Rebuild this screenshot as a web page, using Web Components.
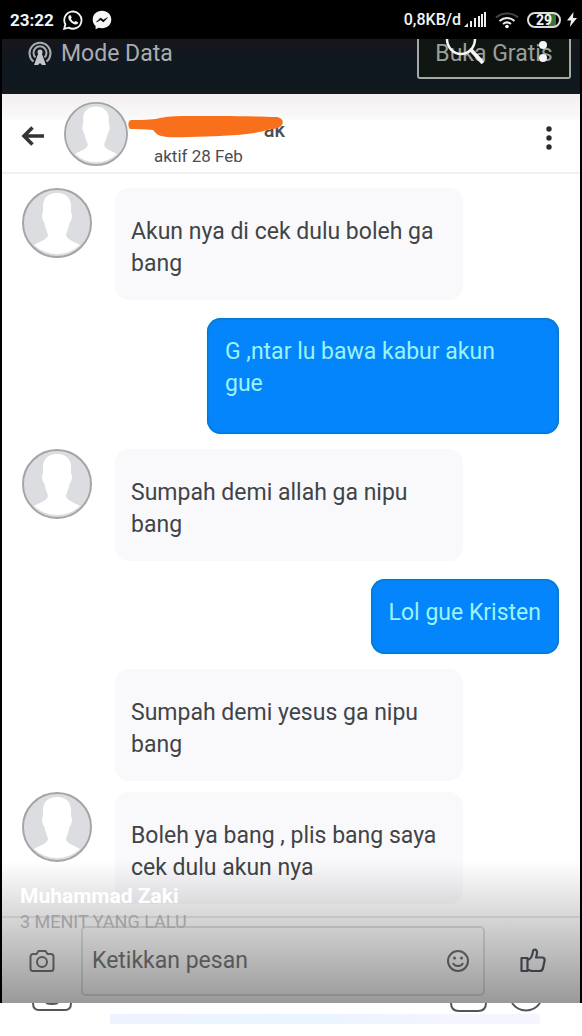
<!DOCTYPE html>
<html lang="id">
<head>
<meta charset="utf-8">
<meta name="viewport" content="width=device-width, initial-scale=1">
<title>Cerita Muhammad Zaki</title>
<style>
body { margin: 0; background: #fff; font-family: Roboto, "Noto Sans", sans-serif; color: #3c4043; }
</style>
</head>
<body>
<story-view></story-view>
<script>
function define(name, html) {
  const template = document.createElement('template');
  template.innerHTML = html;
  customElements.define(name, class extends HTMLElement {
    constructor() {
      super();
      this.attachShadow({ mode: 'open' }).append(template.content.cloneNode(true));
    }
  });
}

define('status-bar', `
<style>
:host { display: flex; align-items: center; justify-content: space-between; height: 39px; padding: 0 5px 0 10px; background: #000; color: #f4f4f4; font-size: 17px; font-weight: 700; line-height: 20px; }
div { display: flex; align-items: center; }
.left { gap: 9px; }
.right { gap: 3px; font-size: 16px; font-weight: 500; }
.wifi { margin-left: 5px; }
.battery { display: flex; align-items: center; justify-content: center; box-sizing: border-box; width: 34px; height: 16px; margin: 0 3px 0 5px; border: 2px solid #ddd; border-radius: 8px; font-size: 14px; font-weight: 700; line-height: 12px; background: linear-gradient(90deg, #000 62%, #3a713c 62%, #3a713c 90%, #000 90%); }
svg { display: block; }
</style>
<div class="left">
  <span>23:22</span>
  <svg width="20" height="20" viewBox="0 0 20 20" fill="none" stroke="#f4f4f4" stroke-width="1.8"><path d="M1.2 18.8l1.2-4.5a8.6 8.6 0 1 1 3.3 3.3z"/><path d="M6.2 5.4l1-.7 1.6 2.8-.9 1.3c.8 1.6 1.8 2.6 3.4 3.3l1.2-1.2 2.6 1.4c-.1 1.6-1.2 2.3-2.6 2.2-3.7-.5-7-4-7.2-7.200 0-.8.3-1.400.9-1.900z" fill="#f4f4f4" stroke="none"/></svg>
  <svg width="20" height="20" viewBox="0 0 20 20"><path d="M10 .7C4.600.7.7 4.600.7 9.500c0 2.700 1.100 5 2.900 6.500v3.300l3-1.500c1.100.3 2.200.5 3.400.5 5.400 0 9.300-3.900 9.300-8.800S15.400.7 10 .7z" fill="#f8f8f8"/><path d="M4.500 12l4.100-4.100 2.700 2.200 4.100-2.400-4 4.300-2.800-2.200z" fill="#000" stroke="#000" stroke-width=".6"/></svg>
</div>
<div class="right">
  <span>0,8KB/d</span>
  <svg width="23" height="17" viewBox="0 0 23 17" fill="#eee"><path d="M0 16l4-4v4zM6 10h2v6H6zM10 7h2v9h-2zM14 5h2v11h-2zM17 3h2v13h-2zM20 1h2v15h-2z"/></svg>
  <svg class="wifi" width="24" height="18" viewBox="0 0 24 18" fill="none" stroke-width="2"><path d="M1 6.500C7 1 17 1 23 6.500" stroke="#444"/><path d="M4.500 10c4.500-4 10.500-4 15 0M8 13c2.500-2 5.500-2 8 0" stroke="#eee"/><circle cx="12" cy="15.500" r="1.800" fill="#fff"/></svg>
  <span class="battery">29</span>
  <svg width="10" height="15" viewBox="0 0 10 15" fill="#eee"><path d="M6.500 0L0 8.500h4L2.800 15 10 6H6z"/></svg>
</div>`);

define('data-bar', `
<style>
:host { position: relative; display: flex; justify-content: space-between; height: 55px; background: linear-gradient(#17161d, #101820 45%, #10191e); overflow: hidden; color: #a9adb1; font-size: 23px; line-height: 30px; }
.mode { display: flex; gap: 9px; padding-left: 26px; }
.mode svg { margin-top: 2px; }
button { box-sizing: border-box; width: 154px; height: 40px; margin-right: 9px; padding: 0 0 10px; border: 2px solid #a4aaa5; border-top: 0; border-radius: 0 0 3px 3px; background: #101713; color: #9b9f9c; font: inherit; }
.tools { position: absolute; top: 0; right: 30px; }
</style>
<div class="mode">
  <svg width="24" height="25" viewBox="0 0 24 25" fill="none" stroke="#a9adb1" stroke-width="2"><path d="M5.500 20.500a10.500 10.500 0 1 1 13 0"/><path d="M7.500 16.500a6.500 6.500 0 1 1 9 0" /><circle cx="12" cy="11" r="2.500" fill="#c3c7ca" stroke="none"/><path d="M10 13h4l4 11h-4l-2-2-2 2H6z" fill="#c3c7ca" stroke="none"/></svg>
  <span>Mode Data</span>
</div>
<button type="button">Buka Gratis</button>
<svg class="tools" width="108" height="28" viewBox="0 0 108 28" fill="none" stroke="#f6f6f6"><path d="M5 0a14 15 0 0 0 28 0" stroke-width="2.500"/><path d="M29 11l12 13" stroke-width="4"/><g fill="#f6f6f6" stroke="none"><circle cx="101" cy="6" r="4"/><circle cx="101" cy="19" r="4"/></g></svg>`);

define('user-avatar', `
<style>
:host { display: block; flex: none; width: 70px; height: 70px; }
svg { display: block; width: 100%; height: 100%; }
</style>
<svg viewBox="0 0 70 70"><circle cx="35" cy="35" r="34" fill="#dcdde1"/><path d="M35 5C25 5 20.500 11 21 20c0 3 .2 4-1 7 0 4 1 6 2.500 8 1 6 3 9 3.500 12-.5 4-5 5-14 10A34 34 0 0 0 58 57c-9-5-13.500-6-14-10 .5-3 2.500-6 3.500-12 1.500-2 2.500-4 2.500-8-1.200-3-1-4-1-7C49.500 11 45 5 35 5z" fill="#fff"/><circle cx="35" cy="35" r="34" fill="none" stroke="#a5a5a7" stroke-width="2"/></svg>`);

define('chat-header', `
<style>
:host { display: flex; align-items: center; box-sizing: border-box; height: 80px; padding: 2px 16px 0 18px; border-bottom: 2px solid #f0f0f1; background: linear-gradient(#f3eeef, #fafafa 32%, #fff 34%); }
button { display: block; flex: none; padding: 0; border: 0; background: none; }
svg { display: block; }
user-avatar { width: 64px; height: 64px; margin-left: 18px; }
.who { position: relative; flex: 1; margin-left: 26px; padding-top: 18px; color: #4c4c4f; }
.name { width: 131px; margin: 0; text-align: right; font-size: 20px; font-weight: 500; line-height: 26px; }
.seen { margin: 0; font-size: 17px; line-height: 26px; }
.mark { position: absolute; left: -26px; top: 16px; }
.back { padding-top: 4px; }
.more { padding: 8px 0 0; }
</style>
<button class="back" type="button" aria-label="Kembali"><svg width="26" height="24" viewBox="0 0 26 24" fill="none" stroke="#353537" stroke-width="3.600"><path d="M24 12H4M12.500 3.500L4 12l8.500 8.500"/></svg></button>
<user-avatar></user-avatar>
<div class="who">
  <p class="name">ak</p>
  <p class="seen">aktif 28 Feb</p>
  <svg class="mark" width="156" height="24" viewBox="0 0 156 24" fill="#f8701c"><path d="M3 5C12 5 24 5 32 3 42 1 52 1 62 1c25 0 60 0 87 1 5 1 7 4 5 8-4 5-10 3-18 6-20 5-50 5-74 6-10 0-22 1-29-1-4-1-6-4-8-6-8-1-16-1-22-1C0 14-1 6 3 5z"/></svg>
</div>
<button class="more" type="button" aria-label="Opsi lainnya"><svg width="30" height="26" viewBox="0 0 30 26" fill="#2c2c2e"><circle cx="15" cy="4" r="2.700"/><circle cx="15" cy="13" r="2.700"/><circle cx="15" cy="22" r="2.700"/></svg></button>`);

define('chat-message', `
<style>
:host { display: flex; gap: 23px; align-items: flex-start; padding: 0 21px 0 20px; font-size: 23px; line-height: 32px; }
p { box-sizing: border-box; width: 348px; min-height: 112px; margin: 0; padding: 28px 16px 20px; border-radius: 14px; background: #f9f9fc; color: #414447; }
:host(:not([avatar])) { padding-left: 113px; }
:host(:not([avatar])) user-avatar { display: none; }
:host([mine]) { justify-content: flex-end; padding-left: 20px; }
:host([mine]) p { width: auto; max-width: 352px; min-height: 75px; padding: 18px 18px 25px; background: #0585fc; color: #9cf3f6; box-shadow: inset 0 0 2px 1px #0b70bd, 0 0 3px #d3fff5; }
:host([tall]) p { min-height: 116px; padding-right: 32px; }
</style>
<user-avatar></user-avatar>
<p><slot></slot></p>`);

define('chat-composer', `
<style>
:host { display: flex; align-items: center; box-sizing: border-box; height: 87px; border-top: 2px solid #e9e9eb; background: #fff; }
button { display: flex; align-items: center; justify-content: center; flex: none; width: 79px; height: 60px; padding: 0; border: 0; background: none; }
.like { width: 95px; }
.box { display: flex; align-items: center; flex: 1; min-width: 0; box-sizing: border-box; height: 70px; border: 2px solid #e2e2e4; border-radius: 5px; }
input { flex: 1; min-width: 0; padding: 0 0 0 9px; border: 0; outline: 0; background: none; font: 23px/32px Roboto, "Noto Sans", sans-serif; color: #333; }
input::placeholder { color: #7b7b7d; opacity: 1; }
.box button { width: 50px; }
</style>
<button type="button" aria-label="Kamera"><svg width="26" height="24" viewBox="0 0 26 24" fill="none" stroke="#77777a" stroke-width="2"><path d="M4 5h3.500l2-3h7l2 3H22a2.500 2.500 0 0 1 2.500 2.500v12A2.500 2.500 0 0 1 22 22H4a2.500 2.500 0 0 1-2.500-2.500v-12A2.500 2.500 0 0 1 4 5z"/><circle cx="13" cy="13" r="5"/></svg></button>
<div class="box">
  <input type="text" placeholder="Ketikkan pesan" aria-label="Ketikkan pesan">
  <button type="button" aria-label="Emoji"><svg width="24" height="24" viewBox="0 0 24 24" fill="none" stroke="#757578" stroke-width="2"><circle cx="12" cy="12" r="10"/><path d="M7 14c1.500 4 8.500 4 10 0"/><g fill="#757578" stroke="none"><circle cx="8.500" cy="9" r="1.500"/><circle cx="15.500" cy="9" r="1.500"/></g></svg></button>
</div>
<button class="like" type="button" aria-label="Suka"><svg width="26" height="25" viewBox="0 0 26 25" fill="none" stroke="#555c66" stroke-width="2.200" stroke-linejoin="round"><path d="M1.500 10h6v13h-6zM7.500 12c4-1 5-4 5.500-9 .3-2 4-2 4 1.500 0 2-.5 3.500-1 5h6c2 0 3 1.500 2.500 3.500l-1.500 7c-.4 2-1.500 3-3.500 3h-8l-4-1.500"/></svg></button>`);

define('story-caption', `
<style>
:host { display: block; box-sizing: border-box; height: 142px; padding: 22px 20px 0 18px; background: linear-gradient(rgba(0,0,0,0), rgba(0,0,0,.14) 35%, rgba(0,0,0,.4)); pointer-events: none; }
p { margin: 0; line-height: 26px; }
.author { color: #fff; font-size: 21px; font-weight: 700; }
.time { color: #a19fa0; font-size: 18px; }
</style>
<p class="author">Muhammad Zaki</p>
<p class="time">3 MENIT YANG LALU</p>`);

define('page-edge', `
<style>
:host { display: grid; grid-template-columns: 110px 1fr 142px; height: 33px; background: #fff; }
svg { display: block; }
.strip { height: 10px; margin-top: 11px; background: linear-gradient(90deg, #edf3ff, #eaf5ff 60%, #f3f4ff); }
</style>
<svg width="110" height="33" viewBox="0 0 110 33" fill="none" stroke="#555" stroke-width="2"><path d="M33 0c0 5 2 7 6 7h26c4 0 6-2 6-7M46 0q6 2 12 0"/></svg>
<div class="strip"></div>
<svg width="142" height="33" viewBox="0 0 142 33" fill="none" stroke="#555" stroke-width="2"><path d="M0 11h100v10H0z" fill="#f4f5ff" stroke="none"/><path d="M11 0c0 5 3 8 8 8h19c5 0 8-3 8-8M72 0c7 10 21 10 28 0"/></svg>`);

define('story-view', `
<style>
:host { display: block; }
.shot { position: relative; border: solid #000; border-width: 0 2px; background: #fff; }
.thread { display: grid; padding: 14px 0 12px; }
.reply { margin-top: 18px; }
.next { margin-top: 15px; }
.close { margin-top: 11px; }
story-caption { position: absolute; left: 0; right: 0; bottom: 0; }
</style>
<status-bar></status-bar>
<main class="shot">
  <data-bar></data-bar>
  <chat-header></chat-header>
  <section class="thread">
    <chat-message avatar>Akun nya di cek dulu boleh ga bang</chat-message>
    <chat-message class="reply" mine tall>G ,ntar lu bawa kabur akun gue</chat-message>
    <chat-message class="next" avatar>Sumpah demi allah ga nipu bang</chat-message>
    <chat-message class="reply" mine>Lol gue Kristen</chat-message>
    <chat-message class="next">Sumpah demi yesus ga nipu bang</chat-message>
    <chat-message class="close" avatar>Boleh ya bang , plis bang saya cek dulu akun nya</chat-message>
  </section>
  <chat-composer></chat-composer>
  <story-caption></story-caption>
</main>
<page-edge></page-edge>`);
</script>
</body>
</html>
